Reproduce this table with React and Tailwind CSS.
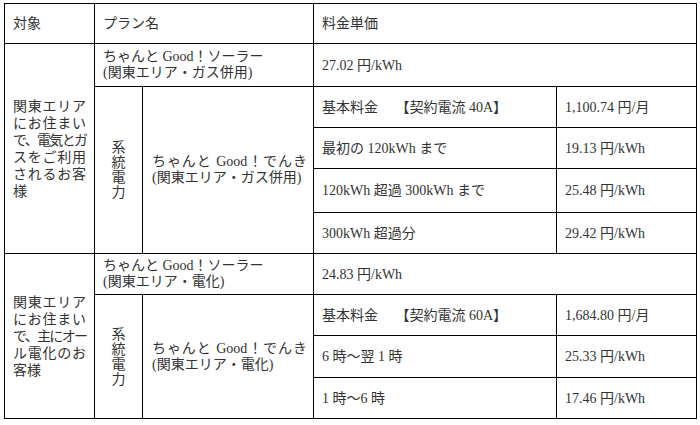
const font = { fontFamily: '"Liberation Serif", "Noto Sans CJK JP", serif' };

function Lines({ lines }) {
  return (
    <div className="leading-[17px] whitespace-nowrap">
      {lines.map((l, i) => (
        <div
          key={i}
          className={
            (i < lines.length - 1 ? "text-justify [text-align-last:justify] " : "") +
            (l.length > 5 ? "tracking-[-2px]" : "")
          }
        >
          {l}
        </div>
      ))}
    </div>
  );
}

function Vertical({ text }) {
  return (
    <div className="flex flex-col items-center leading-[15px]">
      {text.split("").map((c, i) => (
        <span key={i}>{c}</span>
      ))}
    </div>
  );
}

function Plan({ area }) {
  return (
    <div className="leading-[16px] whitespace-nowrap">
      <div className="text-justify [text-align-last:justify]">ちゃんと Good！でんき</div>
      <div>({area})</div>
    </div>
  );
}

function Solar({ area }) {
  return (
    <div className="leading-[16px]">
      <div>ちゃんと Good！ソーラー</div>
      <div>({area})</div>
    </div>
  );
}

const cell = "border border-black align-middle px-[8px] font-normal text-left";

export default function App() {
  return (
    <div className="w-[700px] h-[425px] bg-white pt-[3px] pl-[4px]" style={font}>
      <table className="table-fixed border-collapse w-[692px] text-[14px] text-[#333]">
        <colgroup>
          <col className="w-[90px]" />
          <col className="w-[48px]" />
          <col className="w-[171px]" />
          <col className="w-[243px]" />
          <col className="w-[140px]" />
        </colgroup>
        <tbody>
          <tr className="h-[40px]">
            <td className={cell}>対象</td>
            <td className={cell} colSpan={2}>プラン名</td>
            <td className={cell} colSpan={2}>料金単価</td>
          </tr>
          <tr className="h-[43px]">
            <td className={cell + " px-[7px]"} rowSpan={5}>
              <Lines lines={["関東エリア", "にお住まい", "で、電気とガ", "スをご利用", "されるお客", "様"]} />
            </td>
            <td className={cell} colSpan={2}>
              <Solar area="関東エリア・ガス併用" />
            </td>
            <td className={cell} colSpan={2}>27.02 円/kWh</td>
          </tr>
          <tr className="h-[41px]">
            <td className={cell + " px-0"} rowSpan={4}>
              <Vertical text="系統電力" />
            </td>
            <td className={cell + " pl-[9px] pr-[6px]"} rowSpan={4}>
              <Plan area="関東エリア・ガス併用" />
            </td>
            <td className={cell + " whitespace-pre"}>基本料金　 【契約電流 40A】</td>
            <td className={cell}>1,100.74 円/月</td>
          </tr>
          <tr className="h-[41px]">
            <td className={cell}>最初の 120kWh まで</td>
            <td className={cell}>19.13 円/kWh</td>
          </tr>
          <tr className="h-[44px]">
            <td className={cell}>120kWh 超過 300kWh まで</td>
            <td className={cell}>25.48 円/kWh</td>
          </tr>
          <tr className="h-[41px]">
            <td className={cell}>300kWh 超過分</td>
            <td className={cell}>29.42 円/kWh</td>
          </tr>
          <tr className="h-[41px]">
            <td className={cell + " px-[7px]"} rowSpan={4}>
              <Lines lines={["関東エリア", "にお住まい", "で、主にオー", "ル電化のお", "客様"]} />
            </td>
            <td className={cell} colSpan={2}>
              <Solar area="関東エリア・電化" />
            </td>
            <td className={cell} colSpan={2}>24.83 円/kWh</td>
          </tr>
          <tr className="h-[41px]">
            <td className={cell + " px-0"} rowSpan={3}>
              <Vertical text="系統電力" />
            </td>
            <td className={cell + " pl-[9px] pr-[6px]"} rowSpan={3}>
              <Plan area="関東エリア・電化" />
            </td>
            <td className={cell + " whitespace-pre"}>基本料金　 【契約電流 60A】</td>
            <td className={cell}>1,684.80 円/月</td>
          </tr>
          <tr className="h-[42px]">
            <td className={cell}>6 時～翌 1 時</td>
            <td className={cell}>25.33 円/kWh</td>
          </tr>
          <tr className="h-[41px]">
            <td className={cell}>1 時～6 時</td>
            <td className={cell}>17.46 円/kWh</td>
          </tr>
        </tbody>
      </table>
    </div>
  );
}
